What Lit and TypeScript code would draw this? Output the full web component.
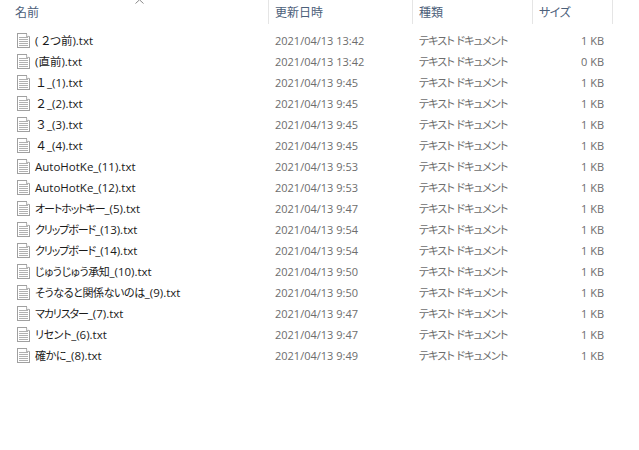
import { LitElement, html, css, svg } from "lit";
import { customElement } from "lit/decorators.js";

const T = "テキスト ドキュメント";
// [Japanese part, its style class, remainder, date, size]
const rows: [string, string, string, string, string][] = [
  ["( ２つ前)", "", ".txt", "2021/04/13 13:42", "1 KB"],
  ["(直前)", "", ".txt", "2021/04/13 13:42", "0 KB"],
  ["１", "full", "_(1).txt", "2021/04/13 9:45", "1 KB"],
  ["２", "full", "_(2).txt", "2021/04/13 9:45", "1 KB"],
  ["３", "full", "_(3).txt", "2021/04/13 9:45", "1 KB"],
  ["４", "full", "_(4).txt", "2021/04/13 9:45", "1 KB"],
  ["", "", "AutoHotKe_(11).txt", "2021/04/13 9:53", "1 KB"],
  ["", "", "AutoHotKe_(12).txt", "2021/04/13 9:53", "1 KB"],
  ["オートホットキー", "kata", "_(5).txt", "2021/04/13 9:47", "1 KB"],
  ["クリップボード", "kata", "_(13).txt", "2021/04/13 9:54", "1 KB"],
  ["クリップボード", "kata", "_(14).txt", "2021/04/13 9:54", "1 KB"],
  ["じゅうじゅう承知", "hira", "_(10).txt", "2021/04/13 9:50", "1 KB"],
  ["そうなると関係ないのは", "hira", "_(9).txt", "2021/04/13 9:50", "1 KB"],
  ["マカリスター", "kata", "_(7).txt", "2021/04/13 9:47", "1 KB"],
  ["リセント", "hira", "_(6).txt", "2021/04/13 9:47", "1 KB"],
  ["確かに", "hira", "_(8).txt", "2021/04/13 9:49", "1 KB"],
];

const icon = svg`<svg class="ic" width="13" height="15" viewBox="0 0 13 15" shape-rendering="crispEdges">
  <path d="M.5 .5H9.5L12.5 3.5V14.5H.5Z" fill="#fff" stroke="#a0a0a0"/>
  <path d="M9.5 .5V3.5H12.5" fill="#f2f2f2" stroke="#b8b8b8"/>
  <path d="M2 4.5H11M2 6.5H11M2 8.5H11M2 10.5H11M2 12.5H11" stroke="#b0b0b0"/>
</svg>`;

@customElement("app-root")
export class AppRoot extends LitElement {
  static styles = css`
    :host {
      display: block;
      width: 639px;
      height: 450px;
      background: #fff;
      overflow: hidden;
      font-family: "Open Sans", "Noto Sans CJK JP", sans-serif;
      font-size: 11px;
      font-feature-settings: "palt";
      position: relative;
    }
    .caret {
      position: absolute;
      left: 135px;
      top: -1px;
    }
    .head {
      display: grid;
      grid-template-columns: 269px 144px 120px 80px;
      height: 24px;
      color: #4c607a;
    }
    .hc {
      border-right: 1px solid #e5e5e5;
      padding-left: 6px;
      line-height: 24px;
      font-size: 12px;
      font-family: "Noto Sans CJK JP", sans-serif;
    }
    .hc:first-child {
      padding-left: 15px;
    }
    .hc:last-child {
      letter-spacing: -0.5px;
    }
    .list {
      padding-top: 6px;
    }
    .row {
      display: grid;
      grid-template-columns: 269px 144px 120px 71px;
      height: 21px;
      align-items: center;
      line-height: 21px;
      color: #6d6d6d;
      white-space: nowrap;
    }
    .name {
      display: flex;
      align-items: center;
      gap: 5px;
      padding-left: 17px;
      color: #1a1a1a;
      font-size: 11.5px;
    }
    .ic {
      flex: none;
    }
    .full {
      font-feature-settings: normal;
      font-size: 12px;
    }
    .kata {
      font-size: 11px;
      letter-spacing: -1.1px;
    }
    .hira {
      font-size: 11px;
      letter-spacing: -0.4px;
    }
    .date {
      padding-left: 6px;
    }
    .type {
      padding-left: 6px;
      font-size: 11px;
      letter-spacing: -0.8px;
    }
    .size {
      text-align: right;
    }
  `;

  render() {
    return html`
      <svg class="caret" width="9" height="5" viewBox="0 0 9 5">
        <path d="M.5 4.5L4.5 .8L8.5 4.5" fill="none" stroke="#8a8a8a"/>
      </svg>
      <div class="head">
        <div class="hc">名前</div>
        <div class="hc">更新日時</div>
        <div class="hc">種類</div>
        <div class="hc">サイズ</div>
      </div>
      <div class="list">
        ${rows.map(
          ([j, c, n, d, s]) => html`<div class="row">
            <div class="name">${icon}<span><span class=${c}>${j}</span>${n}</span></div>
            <div class="date">${d}</div>
            <div class="type">${T}</div>
            <div class="size">${s}</div>
          </div>`
        )}
      </div>
    `;
  }
}
